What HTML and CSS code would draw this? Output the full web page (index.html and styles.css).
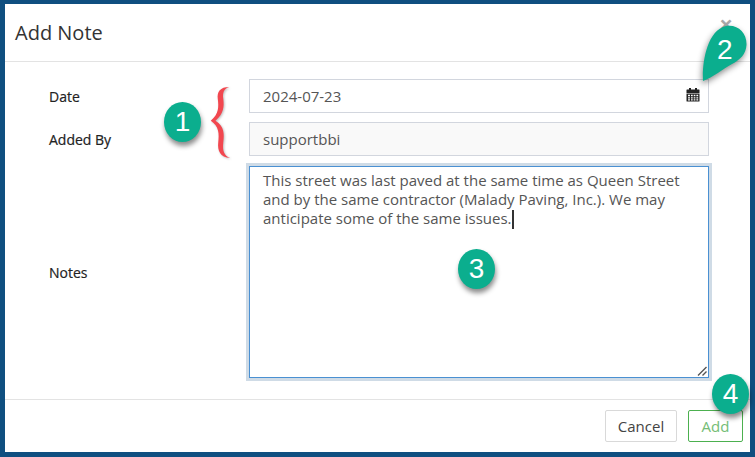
FILE: index.html
```html
<!DOCTYPE html>
<html lang="en">

<head>
    <meta charset="UTF-8">
    <title>Add Note</title>
    <link rel="stylesheet" href="styles.css">
</head>

<body>
    <div class="modal">
        <div class="modal-header">
            <h1>Add Note</h1>
            <span class="close">&times;</span>
        </div>

        <form class="modal-body">
            <div class="form-row">
                <label>Date</label>
                <div class="input date-input">
                    <span>2024-07-23</span>
                    <svg class="cal-icon" width="14" height="14" viewBox="0 0 14 14">
                        <path fill="#222" d="M1 1.500h2V0h2v1.500h4V0h2v1.500h2a.5.5 0 0 1 .5.5V5H.5V2A.5.5 0 0 1 1 1.500z" />
                        <path fill="#222" fill-rule="evenodd"
                            d="M.5 5.600h13v7.400a.6.6 0 0 1-.6.6H1.100a.6.6 0 0 1-.6-.6zM2 6.800v1.400h2V6.800zm3 0v1.400h1.700V6.800zm2.700 0v1.400h1.700V6.800zm2.700 0v1.400h1.800V6.800zM2 9.200v1.200h2V9.200zm3 0v1.200h1.700V9.200zm2.700 0v1.200h1.700V9.200zm2.700 0v1.200h1.800V9.200zM2 11.300v1.200h2v-1.200zm3 0v1.200h1.700v-1.200zm2.700 0v1.200h1.700v-1.200zm2.700 0v1.200h1.800v-1.200z" />
                    </svg>
                </div>
            </div>
            <div class="form-row">
                <label>Added By</label>
                <div class="input readonly">supportbbi</div>
            </div>
            <div class="form-row notes-row">
                <label>Notes</label>
                <div class="input textarea">
                    <span>This street was last paved at the same time as Queen Street and by the same contractor (Malady Paving, Inc.). We may anticipate some of the same issues.<i class="caret"></i></span>
                    <svg class="grip" width="10" height="10" viewBox="0 0 10 10">
                        <path d="M1 9.500 9.500 1M5.500 9.500 9.500 5.500" stroke="#555" stroke-width="1.4" fill="none" />
                    </svg>
                </div>
            </div>
        </form>

        <div class="modal-footer">
            <button type="button" class="btn btn-cancel">Cancel</button>
            <button type="button" class="btn btn-add">Add</button>
        </div>
    </div>

    <!-- callouts drawn over the dialog -->
    <svg class="brace" width="22" height="73" viewBox="0 0 24 78" preserveAspectRatio="none">
        <path fill="#f2474f"
            d="M21 1C15 3 13.500 7 14.500 14C15.500 22 15 30 6 37C16 43 15.500 52 14.500 60C13.500 69 15 74 22 77C11 76 8 69 9 60C10 51 10 43 0.800 37C10 30 9.500 22 8.500 14C7.500 6 11 1 21 1Z" />
    </svg>
    <div class="badge badge-1">1</div>
    <span class="drop-wrap">
        <svg class="drop" width="50" height="62" viewBox="0 0 50 62">
            <path fill="#0bae8e"
                d="M1 56C0 40 4 6 24 1C36 -1 45 8 44.500 20C44 29 38 35 30 39C21 44 10 53 1 56Z" />
        </svg>
        <span class="drop-num">2</span>
    </span>
    <div class="badge badge-3">3</div>
    <div class="badge badge-4">4</div>
</body>

</html>
```

FILE: styles.css
```css
* {
    box-sizing: border-box;
}

html,
body {
    height: 100%;
}

body {
    margin: 0;
    padding: 4px 5px 5px 5px;
    background-color: #0f4f80;
    font-family: "Open Sans", Arial, sans-serif;
    color: #444;
    overflow: hidden;
}

.modal {
    width: 745px;
    height: 448px;
    background: #fff;
    display: flex;
    flex-direction: column;
}

.modal-header {
    height: 58px;
    padding: 0 10px;
    border-bottom: 1px solid #e3e3e3;
    display: flex;
    align-items: center;
    justify-content: space-between;
}

h1 {
    margin: 0;
    font-size: 20px;
    font-weight: 400;
    color: #333;
}

.close {
    font-size: 24px;
    font-weight: 700;
    color: #a9a9a9;
    margin: -18px 7px 0 0;
    line-height: 24px;
}

.modal-body {
    flex: 1;
    padding: 17px 41px 21px 44px;
    display: flex;
    flex-direction: column;
    gap: 9px;
    border-bottom: 1px solid #e3e3e3;
}

.form-row {
    display: flex;
    align-items: center;
}

label {
    width: 200px;
    font-size: 14px;
    font-weight: 400;
    color: #222;
    -webkit-text-stroke: 0.2px #222;
}

.input {
    flex: 1;
    height: 34px;
    padding: 0 13px;
    border: 1px solid #d2d6de;
    font-size: 15px;
    color: #555;
    display: flex;
    align-items: center;
    justify-content: space-between;
}

.readonly {
    background: #f9f9f9;
}

.cal-icon {
    margin-right: -5px;
    margin-top: -2px;
}

.notes-row {
    flex: 1;
    margin-top: 1px;
}

.textarea {
    height: 212px;
    align-items: flex-start;
    padding: 4px 13px;
    border: 1px solid #4a90d2;
    box-shadow: 0 0 0 3px #cfdbe6;
    line-height: 19px;
    position: relative;
}

.caret {
    display: inline-block;
    width: 2px;
    height: 19px;
    background: #333;
    vertical-align: -5px;
}

.grip {
    position: absolute;
    right: 1px;
    bottom: 1px;
}

.modal-footer {
    height: 52px;
    padding: 10px 7px 10px 0;
    display: flex;
    justify-content: flex-end;
    gap: 11px;
}

.btn {
    height: 32px;
    padding: 0;
    background: #fff;
    border: 1px solid #d9d9d9;
    border-radius: 2px;
    font-family: inherit;
    font-size: 15px;
    color: #444;
}

.btn-cancel {
    width: 72px;
}

.btn-add {
    width: 55px;
    border-color: #4cb04f;
    color: #74bd76;
}

.badge {
    position: absolute;
    width: 37px;
    height: 40px;
    border-radius: 50%;
    background: #0bae8e;
    color: #fff;
    font-family: "Liberation Sans", Arial, sans-serif;
    font-size: 28px;
    display: flex;
    align-items: center;
    justify-content: center;
    box-shadow: 1px 4px 5px rgba(0, 0, 0, 0.45);
}

.badge-1 {
    left: 164px;
    top: 102px;
}

.badge-3 {
    left: 458px;
    top: 249px;
}

.badge-4 {
    left: 712px;
    top: 374px;
}

.brace {
    position: absolute;
    left: 210px;
    top: 86px;
    filter: drop-shadow(1px 1px 1px rgba(0, 0, 0, 0.25));
}

.drop-wrap {
    position: absolute;
    left: 702px;
    top: 25px;
}

.drop {
    display: block;
    filter: drop-shadow(-1px 3px 3px rgba(0, 0, 0, 0.45));
}

.drop-num {
    position: absolute;
    left: 15px;
    top: 9px;
    color: #fff;
    font-family: "Liberation Sans", Arial, sans-serif;
    font-size: 28px;
    line-height: 32px;
}
```
